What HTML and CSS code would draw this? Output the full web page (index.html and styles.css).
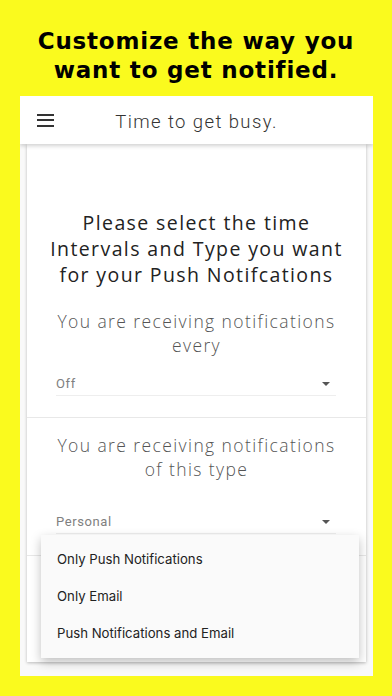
FILE: index.html
```html
<!DOCTYPE html>
<html lang="en">
<head>
    <meta charset="UTF-8">
    <meta name="viewport" content="width=device-width, initial-scale=1.0">
    <title>Time to get busy.</title>
    <link rel="stylesheet" href="styles.css">
</head>
<body>
    <h1 class="headline">Customize the way you<br>want to get notified.</h1>

    <div class="screen">
        <header class="appbar">
            <div class="menu-icon">
                <span></span><span></span><span></span>
            </div>
            <div class="appbar-title">Time to get busy.</div>
            <div></div>
        </header>

        <div class="card">
            <section class="section first">
                <h2 class="prompt">Please select the time<br>Intervals and Type you want<br>for your Push Notifcations</h2>
                <p class="label">You are receiving notifications<br>every</p>
                <div class="select">
                    <span>Off</span>
                    <span class="arrow"></span>
                </div>
            </section>

            <section class="section">
                <p class="label">You are receiving notifications<br>of this type</p>
                <div class="select">
                    <span>Personal</span>
                    <span class="arrow"></span>
                    <ul class="dropdown">
                        <li>Only Push Notifications</li>
                        <li>Only Email</li>
                        <li>Push Notifications and Email</li>
                    </ul>
                </div>
            </section>

            <section class="section empty"></section>
        </div>
    </div>
</body>
</html>
```

FILE: styles.css
```css
body {
    margin: 0;
    background: #fafa1e;
    font-family: "Open Sans", sans-serif;
    height: 696px;
    overflow: hidden;
}

.headline {
    margin: 0;
    height: 96px;
    box-sizing: border-box;
    padding-top: 27px;
    text-align: center;
    font-family: "DejaVu Sans", sans-serif;
    font-weight: 700;
    font-size: 23px;
    line-height: 29px;
    letter-spacing: 0.8px;
    color: #000;
}

.screen {
    margin: 0 19px 0 20px;
    height: 580px;
    background: #f9f9f9;
    overflow: hidden;
}

.appbar {
    position: relative;
    z-index: 2;
    height: 48px;
    background: #fff;
    display: grid;
    grid-template-columns: 1fr auto 1fr;
    align-items: center;
    box-shadow: 0 2px 4px rgba(0, 0, 0, 0.18);
}

.menu-icon {
    padding-left: 17px;
    display: flex;
    flex-direction: column;
    gap: 3.5px;
}

.menu-icon span {
    display: block;
    width: 17px;
    height: 2px;
    background: #333;
}

.appbar-title {
    font-family: Roboto, sans-serif;
    font-weight: 300;
    font-size: 18.5px;
    letter-spacing: 1.4px;
    color: #333;
    padding-top: 4px;
}

.card {
    margin: 0 7px;
    height: 518px;
    background: #fff;
    box-shadow: 0 1px 3px rgba(0, 0, 0, 0.25);
}

.section {
    padding: 15px 0 21px;
    border-bottom: 1px solid #e8e8e8;
    text-align: center;
}

.section.first {
    padding-top: 66px;
}

.section.empty {
    border-bottom: none;
}

.prompt {
    margin: 0 0 21px;
    font-weight: 400;
    font-size: 19.5px;
    line-height: 26px;
    letter-spacing: 1.4px;
    color: #222;
}

.label {
    margin: 0;
    font-weight: 300;
    font-size: 17.5px;
    line-height: 24px;
    letter-spacing: 1.4px;
    color: #555;
}

.select {
    position: relative;
    margin: 17px 30px 0 29px;
    padding-bottom: 1px;
    border-bottom: 1px solid #eee;
    display: flex;
    justify-content: space-between;
    align-items: center;
    text-align: left;
    font-family: Roboto, sans-serif;
    font-size: 13px;
    line-height: 20px;
    letter-spacing: 0.6px;
    color: #808080;
}

.section:nth-child(2) .select {
    margin-top: 31px;
}

.arrow {
    margin-right: 6px;
    border-left: 4px solid transparent;
    border-right: 4px solid transparent;
    border-top: 4px solid #555;
}

.dropdown {
    position: absolute;
    z-index: 3;
    top: 23px;
    left: -15px;
    width: 318px;
    margin: 0;
    padding: 6px 0;
    list-style: none;
    background: #fafafa;
    box-shadow: 0 4px 10px rgba(0, 0, 0, 0.25);
    letter-spacing: 0;
}

.dropdown li {
    padding-left: 16px;
    font-family: Inter, sans-serif;
    font-size: 13.2px;
    line-height: 37px;
    color: #222;
}
```
